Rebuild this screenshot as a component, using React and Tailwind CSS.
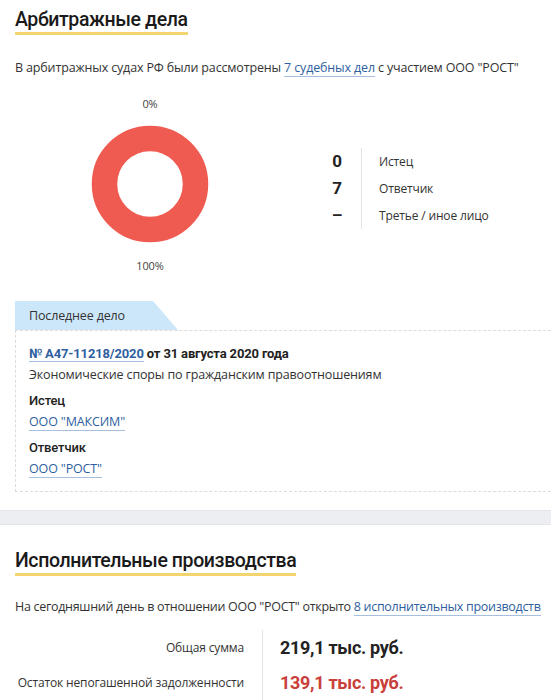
const font = { fontFamily: '"Open Sans", "Noto Sans", sans-serif' }
const strong = { fontFamily: 'Roboto, "Open Sans", sans-serif' }

function Heading({ children }) {
  return (
    <div className="inline-block">
      <h2 style={strong} className="text-[19.5px] font-medium leading-[24px] tracking-[-0.4px] text-[#1a1a1a]">{children}</h2>
      <div className="h-[3px] bg-[#f3d56f]" />
    </div>
  )
}

function Link({ children, className = '' }) {
  return (
    <a href="#" className={`text-[#2f5f9f] border-b border-[#a8c0df] ${className}`}>{children}</a>
  )
}

function Donut() {
  return (
    <div className="flex flex-col items-center">
      <div className="text-[11px] text-[#444] leading-[14px]">0%</div>
      <svg width="120" height="120" viewBox="0 0 120 120" className="mt-[13px]">
        <circle cx="60" cy="60" r="45.5" fill="none" stroke="#ef5b50" strokeWidth="25.5" />
      </svg>
      <div className="mt-[15px] text-[11px] text-[#444] leading-[14px]">100%</div>
    </div>
  )
}

export default function App() {
  const stats = [
    ['0', 'Истец'],
    ['7', 'Ответчик'],
    ['–', 'Третье / иное лицо'],
  ]
  return (
    <div style={font} className="w-[551px] bg-white text-[#333] overflow-hidden text-[12.5px] tracking-[-0.15px]">
      <section className="px-[15px] pt-[8px] pb-[18px]">
        <Heading>Арбитражные дела</Heading>
        <p className="mt-[24px] leading-[18px]">
          В арбитражных судах РФ были рассмотрены <Link>7 судебных дел</Link> с участием ООО "РОСТ"
        </p>

        <div className="mt-[20px] flex items-start">
          <div className="w-[270px] flex justify-center">
            <Donut />
          </div>
          <div className="ml-[28px] mt-[51px] flex">
            <div style={strong} className="w-[48px] flex flex-col items-center">
              {stats.map(([n]) => (
                <div key={n} className="h-[27px] leading-[27px] text-[17px] font-bold text-[#222]">{n}</div>
              ))}
            </div>
            <div className="border-l border-[#e3e3e3] pl-[17px] text-[12px]">
              {stats.map(([n, l]) => (
                <div key={l} className="h-[27px] leading-[27px] text-[#333]">{l}</div>
              ))}
            </div>
          </div>
        </div>

        <div className="mt-[28px] mr-[-15px]">
          <div
            className="h-[29px] w-[163px] bg-[#cde7fa] pl-[14px] leading-[29px] text-[#333]"
            style={{ clipPath: 'polygon(0 0, 138px 0, 163px 100%, 0 100%)' }}
          >
            Последнее дело
          </div>
          <div className="border border-dashed border-[#dcdcdc] border-r-0 px-[13px] pt-[13px] pb-[13px]">
            <div style={strong} className="text-[13px] leading-[19px] font-bold text-[#222]">
              <Link className="font-bold">№ A47-11218/2020</Link> от 31 августа 2020 года
            </div>
            <div className="mt-[3px] leading-[18px]">Экономические споры по гражданским правоотношениям</div>
            <div style={strong} className="mt-[8px] text-[13px] leading-[18px] font-medium text-[#222]">Истец</div>
            <div className="mt-[3px] leading-[18px]"><Link>ООО "МАКСИМ"</Link></div>
            <div style={strong} className="mt-[8px] text-[13px] leading-[18px] font-medium text-[#222]">Ответчик</div>
            <div className="mt-[3px] leading-[18px]"><Link>ООО "РОСТ"</Link></div>
          </div>
        </div>
      </section>

      <div className="h-[15px] bg-[#eceef1] border-y border-[#e4e6e9]" />

      <section className="px-[15px] pt-[24px] pb-[20px]">
        <Heading>Исполнительные производства</Heading>
        <p className="mt-[22px] leading-[18px] whitespace-nowrap tracking-[-0.3px]">
          На сегодняшний день в отношении ООО "РОСТ" открыто <Link>8 исполнительных производств</Link>
        </p>
        <div className="mt-[14px] flex text-[12px]">
          <div className="w-[247px] flex flex-col items-end pr-[18px]">
            <div className="h-[35px] leading-[35px]">Общая сумма</div>
            <div className="h-[35px] leading-[35px]">Остаток непогашенной задолженности</div>
          </div>
          <div style={strong} className="border-l border-[#e3e3e3] pl-[17px] tracking-[-0.3px]">
            <div className="h-[35px] leading-[35px] text-[18px] font-bold text-[#222]">219,1 тыс. руб.</div>
            <div className="h-[35px] leading-[35px] text-[18px] font-bold text-[#c9403a]">139,1 тыс. руб.</div>
          </div>
        </div>
      </section>
    </div>
  )
}
